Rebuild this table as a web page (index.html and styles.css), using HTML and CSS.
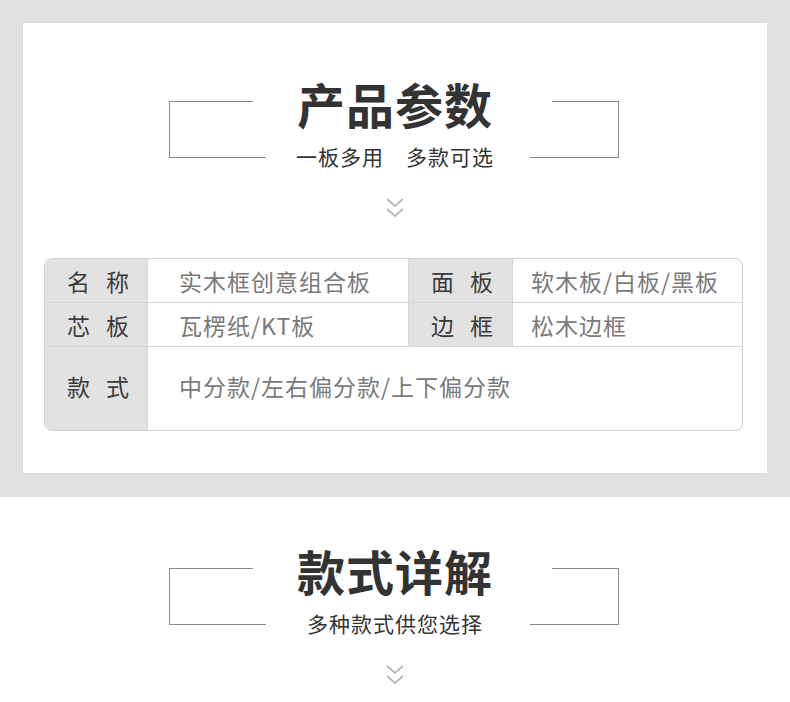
FILE: index.html
```html
<!DOCTYPE html>
<html lang="zh-CN">
<head>
<meta charset="utf-8">
<title>产品参数</title>
<link rel="stylesheet" href="styles.css">
</head>
<body>
<section class="band">
  <div class="card">
    <div class="heading">
      <div class="bracket bracket-left"></div>
      <div class="heading-text">
        <h2 class="title">产品参数</h2>
        <p class="subtitle">一板多用　多款可选</p>
      </div>
      <div class="bracket bracket-right"></div>
    </div>
    <svg class="chevron" width="18" height="20" viewBox="0 0 18 20" aria-hidden="true">
      <polyline points="1,1 9,8 17,1" fill="none" stroke="#b9b9b9" stroke-width="2"/>
      <polyline points="1,11 9,18 17,11" fill="none" stroke="#b9b9b9" stroke-width="2"/>
    </svg>
    <div class="spec">
      <div class="cell label">名称</div>
      <div class="cell value value-a">实木框创意组合板</div>
      <div class="cell label">面板</div>
      <div class="cell value value-b">软木板/白板/黑板</div>
      <div class="cell label">芯板</div>
      <div class="cell value value-a">瓦楞纸/KT板</div>
      <div class="cell label">边框</div>
      <div class="cell value value-b">松木边框</div>
      <div class="cell label last-row">款式</div>
      <div class="cell value value-a wide last-row">中分款/左右偏分款/上下偏分款</div>
    </div>
  </div>
</section>
<section class="detail">
  <div class="heading">
    <div class="bracket bracket-left"></div>
    <div class="heading-text">
      <h2 class="title">款式详解</h2>
      <p class="subtitle">多种款式供您选择</p>
    </div>
    <div class="bracket bracket-right"></div>
  </div>
  <svg class="chevron" width="18" height="20" viewBox="0 0 18 20" aria-hidden="true">
    <polyline points="1,1 9,8 17,1" fill="none" stroke="#b9b9b9" stroke-width="2"/>
    <polyline points="1,11 9,18 17,11" fill="none" stroke="#b9b9b9" stroke-width="2"/>
  </svg>
</section>
</body>
</html>
```
FILE: styles.css
```css
* { box-sizing: border-box; }
html, body { margin: 0; padding: 0; }
body {
  background: #ffffff;
  font-family: "Noto Sans CJK SC", "Noto Sans", sans-serif;
  color: #333;
}
.band {
  background: #dfe1e3;
  padding: 23px 23px 24px;
}
.card {
  background: #ffffff;
  height: 450px;
  padding: 56px 0 0;
  display: flex;
  flex-direction: column;
  align-items: center;
  box-shadow: 0 0 2px rgba(0,0,0,0.06);
}
.heading {
  width: 450px;
  display: grid;
  grid-template-columns: 97px 1fr 97px;
  align-items: start;
  align-self: flex-start;
}
.card .heading { margin-left: 146px; }
.detail .heading { margin-left: 169px; }
.bracket {
  height: 57px;
  margin-top: 22px;
}
.bracket-left {
  border-left: 1px solid #8a8a8a;
  background:
    linear-gradient(#8a8a8a, #8a8a8a) left top / 83px 1px no-repeat,
    linear-gradient(#8a8a8a, #8a8a8a) left bottom / 97px 1px no-repeat;
}
.bracket-right {
  border-right: 1px solid #8a8a8a;
  background:
    linear-gradient(#8a8a8a, #8a8a8a) right top / 66px 1px no-repeat,
    linear-gradient(#8a8a8a, #8a8a8a) right bottom / 88px 1px no-repeat;
}
.heading-text {
  text-align: center;
}
.title {
  margin: 0 0 0 2px;
  font-size: 48px;
  line-height: 48px;
  font-weight: 700;
  letter-spacing: 1px;
  color: #333;
}
.subtitle {
  margin: 19px 0 0 2px;
  font-size: 21px;
  line-height: 21px;
  letter-spacing: 1px;
  color: #333;
}
.chevron {
  display: block;
  margin-top: 31px;
}
.spec {
  align-self: flex-start;
  margin: 40px 0 0 21px;
  width: 699px;
  border: 1px solid #d2d2d2;
  border-radius: 8px;
  overflow: hidden;
  display: grid;
  grid-template-columns: 103px 261px 104px 1fr;
  grid-template-rows: 44px 44px 83px;
  font-size: 23px;
  letter-spacing: 1px;
}
.cell {
  display: flex;
  align-items: center;
  border-bottom: 1px solid #d6d6d6;
  border-right: 1px solid #d6d6d6;
  white-space: nowrap;
}
.cell.value-b { border-right: 0; }
.cell.last-row {
  border-bottom: 0;
  padding-bottom: 6px;
}
.label {
  background: #e2e2e2;
  color: #3a3a3a;
  padding-left: 22px;
  letter-spacing: 16px;
}
.value { color: #7a7a7a; }
.value-a { padding-left: 31px; }
.value-b { padding-left: 18px; }
.wide {
  grid-column: 2 / 5;
  border-right: 0;
}
.detail {
  padding-top: 49px;
  height: 205px;
  display: flex;
  flex-direction: column;
  align-items: center;
}
```
